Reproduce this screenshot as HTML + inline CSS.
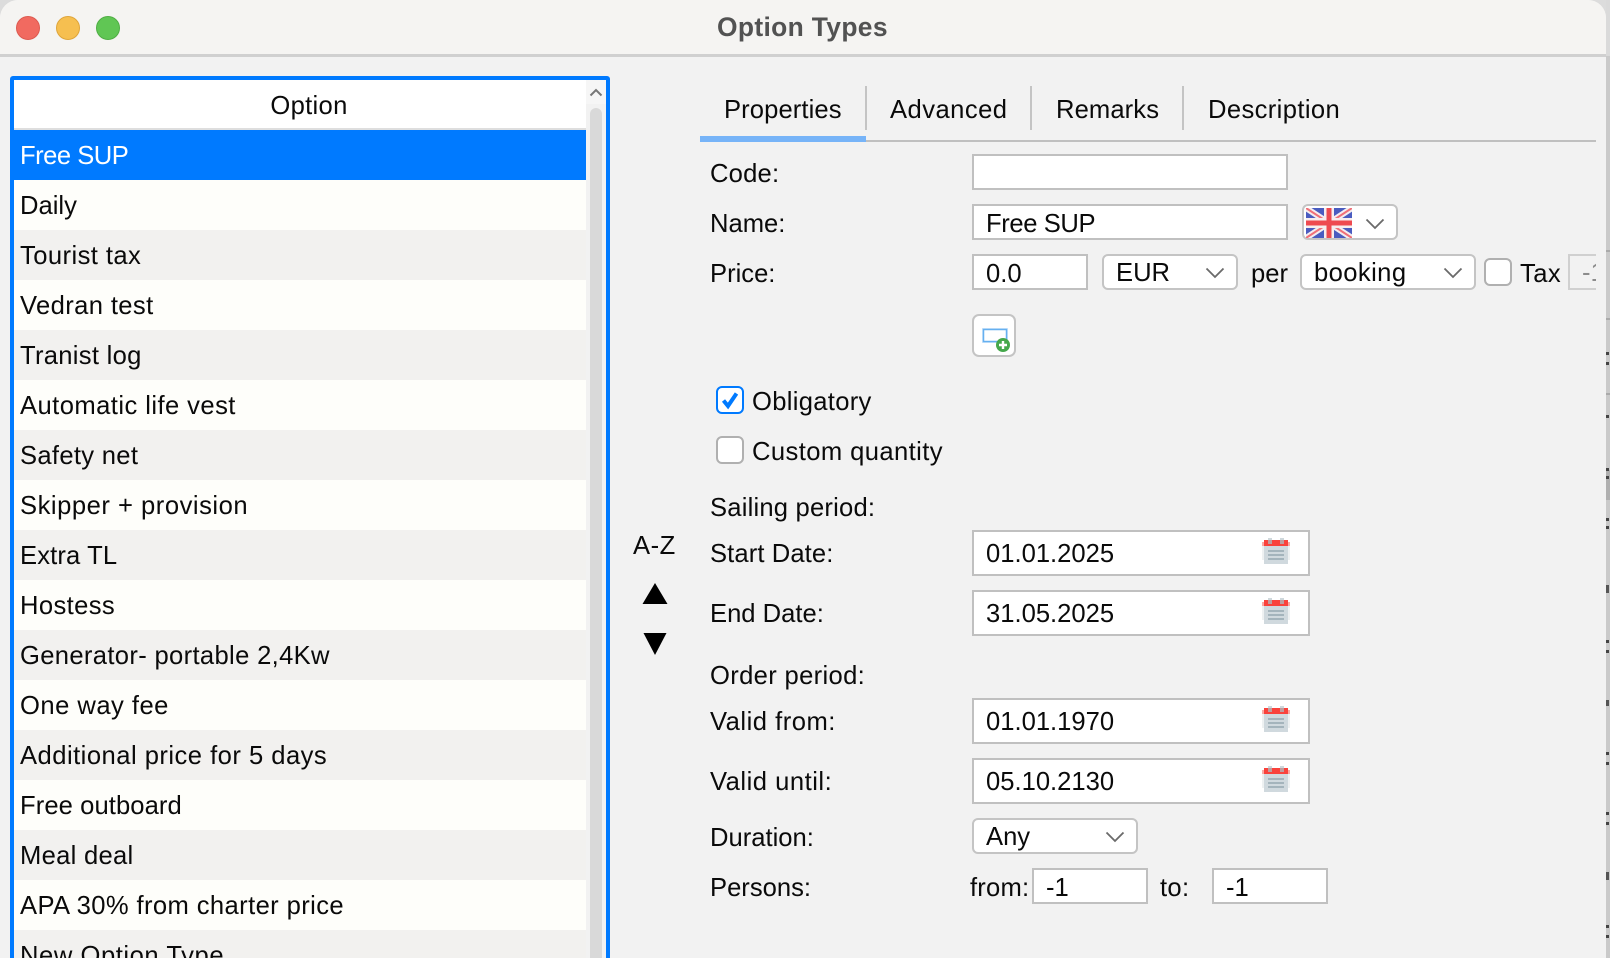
<!DOCTYPE html>
<html>
<head>
<meta charset="utf-8">
<style>
html,body{margin:0;padding:0;width:1610px;height:958px;overflow:hidden;background:#dcdcdc}
body{position:relative;font-family:"Liberation Sans",Arial,sans-serif;color:#0a0a0a;font-size:25.6px}
.a{position:absolute}
.t{position:absolute;white-space:nowrap;line-height:36px;height:36px;margin-top:1px}
.win{position:absolute;left:0;top:0;width:1606px;height:958px;background:#f2f2f2;border-radius:18px 18px 0 0;overflow:hidden}
.bar{position:absolute;left:0;top:0;width:1606px;height:54px;background:#f5f4f2;border-bottom:3px solid #d0d0d0}
.dot{position:absolute;top:16px;width:24px;height:24px;border-radius:50%;box-sizing:border-box}
.inp{position:absolute;box-sizing:border-box;background:#fff;border:2px solid #c0c0c0;height:36px;line-height:36px;padding-left:12px;white-space:nowrap}
.cmb{position:absolute;box-sizing:border-box;background:#fff;border:2px solid #c4c4c4;border-radius:6px;height:36px;line-height:35px;padding-left:12px;white-space:nowrap}
.cmb svg{position:absolute;top:10px}
.date{height:46px;line-height:44px}
.date svg{position:absolute;left:288px;top:6px}
.row{position:absolute;left:14px;width:572px;height:50px;line-height:52px;padding-left:6px;box-sizing:border-box;white-space:nowrap;overflow:hidden}
.l{background:#fefefa}.g{background:#f2f1ef}
.chk{position:absolute;box-sizing:border-box;width:28px;height:28px;background:#fff;border:2px solid #b0b0b0;border-radius:6px}
</style>
</head>
<body>
<svg width="0" height="0" style="position:absolute">
<symbol id="cal" viewBox="0 0 28 26" shape-rendering="crispEdges">
<rect x="0" y="4" width="28" height="18" fill="#eef1f2"/>
<rect x="0" y="4" width="28" height="4" fill="#fba9a4"/>
<rect x="2" y="8" width="24" height="18" fill="#d0d9de"/>
<rect x="2" y="2" width="24" height="6" fill="#f9423c"/>
<rect x="6" y="0" width="4" height="2" fill="#cfd8dc"/>
<rect x="18" y="0" width="4" height="2" fill="#cfd8dc"/>
<rect x="6" y="2" width="4" height="4" fill="#bf9c9e"/>
<rect x="18" y="2" width="4" height="4" fill="#bf9c9e"/>
<rect x="6" y="12" width="16" height="2" fill="#a4b4bc"/>
<rect x="6" y="16" width="16" height="2" fill="#a4b4bc"/>
<rect x="6" y="20" width="16" height="2" fill="#a4b4bc"/>
</symbol>
<symbol id="chev" viewBox="0 0 20 12">
<path d="M1.5 1.5L10 10L18.5 1.5" fill="none" stroke="#6a6a6a" stroke-width="1.8"/>
</symbol>
</svg>

<div class="win">
  <div class="bar"></div>
  <div class="dot" style="left:16px;background:#f16a60;border:1px solid #dd5a50"></div>
  <div class="dot" style="left:56px;background:#f6bf50;border:1px solid #dfa53a"></div>
  <div class="dot" style="left:96px;background:#60c654;border:1px solid #4fae44"></div>
  <div class="t" style="left:717px;top:8px;font-weight:bold;color:#525252;font-size:26.4px;letter-spacing:.35px">Option Types</div>

  <!-- list -->
  <div class="a" style="left:10px;top:76px;width:600px;height:882px;background:#007aff;border-radius:3px 3px 0 0"></div>
  <div class="a" style="left:14px;top:80px;width:592px;height:878px;background:#f2f2f2"></div>
  <div class="a" style="left:14px;top:80px;width:572px;height:48px;background:#fff"></div>
  <div class="a" style="left:14px;top:80px;width:590px;height:48px;line-height:52px;text-align:center;letter-spacing:.3px">Option</div>
  <div class="a" style="left:14px;top:128px;width:572px;height:2px;background:#dedede"></div>
  <div class="a" style="left:586px;top:80px;width:20px;height:24px;background:#f6f6f6"></div>
  <svg class="a" style="left:589px;top:88px" width="14" height="9" viewBox="0 0 14 9"><path d="M1.5 7.5L7 2L12.5 7.5" fill="none" stroke="#777" stroke-width="2"/></svg>
  <div class="a" style="left:590px;top:108px;width:12px;height:850px;background:#d9d9d9;border-radius:6px 6px 0 0"></div>
  <div class="row" style="top:130px;background:#007aff;color:#fff;letter-spacing:-.5px">Free SUP</div>
  <div class="row l" style="top:180px">Daily</div>
  <div class="row g" style="top:230px;letter-spacing:.42px">Tourist tax</div>
  <div class="row l" style="top:280px;letter-spacing:.37px">Vedran test</div>
  <div class="row g" style="top:330px;letter-spacing:.28px">Tranist log</div>
  <div class="row l" style="top:380px;letter-spacing:.43px">Automatic life vest</div>
  <div class="row g" style="top:430px;letter-spacing:.3px">Safety net</div>
  <div class="row l" style="top:480px;letter-spacing:.51px">Skipper + provision</div>
  <div class="row g" style="top:530px;letter-spacing:.13px">Extra TL</div>
  <div class="row l" style="top:580px;letter-spacing:.37px">Hostess</div>
  <div class="row g" style="top:630px;letter-spacing:.33px">Generator- portable 2,4Kw</div>
  <div class="row l" style="top:680px;letter-spacing:.47px">One way fee</div>
  <div class="row g" style="top:730px;letter-spacing:.47px">Additional price for 5 days</div>
  <div class="row l" style="top:780px;letter-spacing:.08px">Free outboard</div>
  <div class="row g" style="top:830px;letter-spacing:.28px">Meal deal</div>
  <div class="row l" style="top:880px;letter-spacing:.39px">APA 30% from charter price</div>
  <div class="row g" style="top:930px;height:28px;letter-spacing:.55px">New Option Type</div>

  <!-- sort -->
  <div class="t" style="left:633px;top:527px;letter-spacing:.5px">A-Z</div>
  <svg class="a" style="left:642px;top:583px" width="26" height="21"><path d="M13 0L25.5 21H.5Z" fill="#000"/></svg>
  <svg class="a" style="left:643px;top:633px" width="24" height="22"><path d="M0.5 0H23.5L12 22Z" fill="#000"/></svg>

  <!-- tabs -->
  <div class="a" style="left:700px;top:140px;width:896px;height:2px;background:#c0c0c0"></div>
  <div class="a" style="left:700px;top:136px;width:166px;height:6px;background:#77b4f8"></div>
  <div class="a" style="left:864.5px;top:86px;width:2px;height:44px;background:#c4c4c4"></div>
  <div class="a" style="left:1030px;top:86px;width:2px;height:44px;background:#c4c4c4"></div>
  <div class="a" style="left:1182px;top:86px;width:2px;height:44px;background:#c4c4c4"></div>
  <div class="t" style="left:724px;top:91px;letter-spacing:.1px">Properties</div>
  <div class="t" style="left:890px;top:91px;letter-spacing:.45px">Advanced</div>
  <div class="t" style="left:1056px;top:91px;letter-spacing:.1px">Remarks</div>
  <div class="t" style="left:1208px;top:91px;letter-spacing:.37px">Description</div>

  <!-- form -->
  <div class="t" style="left:710px;top:155px;letter-spacing:.2px">Code:</div>
  <div class="inp" style="left:972px;top:154px;width:316px"></div>
  <div class="t" style="left:710px;top:205px">Name:</div>
  <div class="inp" style="left:972px;top:204px;width:316px;letter-spacing:-.4px">Free SUP</div>
  <div class="cmb" style="left:1302px;top:204px;width:96px;padding:0">
    <svg style="left:2px;top:2px" width="46" height="30" viewBox="0 0 46 30">
      <rect width="46" height="30" fill="#4a5cc0"/>
      <path d="M0 0L46 30M46 0L0 30" stroke="#f4eef0" stroke-width="6"/>
      <path d="M0 0L46 30M46 0L0 30" stroke="#f07078" stroke-width="2"/>
      <path d="M23 0V30M0 15H46" stroke="#f6eeee" stroke-width="10"/>
      <path d="M23 0V30M0 15H46" stroke="#ee4a50" stroke-width="5"/>
    </svg>
    <svg style="left:61px;top:12px" width="20" height="12"><use href="#chev"/></svg>
  </div>
  <div class="t" style="left:710px;top:255px">Price:</div>
  <div class="inp" style="left:972px;top:254px;width:116px">0.0</div>
  <div class="cmb" style="left:1102px;top:254px;width:136px">EUR<svg style="left:101px;top:11px" width="20" height="12"><use href="#chev"/></svg></div>
  <div class="t" style="left:1251px;top:255px">per</div>
  <div class="cmb" style="left:1300px;top:254px;width:176px;letter-spacing:.4px">booking<svg style="left:141px;top:11px" width="20" height="12"><use href="#chev"/></svg></div>
  <div class="chk" style="left:1484px;top:258px"></div>
  <div class="t" style="left:1520px;top:255px;letter-spacing:.4px">Tax</div>
  <div class="a" style="left:1568px;top:254px;width:28px;height:36px;overflow:hidden">
    <div class="a" style="left:0;top:0;width:40px;height:36px;box-sizing:border-box;background:#f2f2f2;border:2px solid #d0d0d0;line-height:34px;padding-left:12px;color:#8c8c8c">-1</div>
  </div>

  <!-- add button -->
  <div class="a" style="left:972px;top:314px;width:44px;height:43px;box-sizing:border-box;background:#fff;border:2px solid #c4c4c4;border-radius:7px"></div>
  <svg class="a" style="left:980px;top:327px" width="32" height="26" viewBox="0 0 32 26">
    <rect x="2" y="1" width="26" height="15" fill="#cfe6fb"/>
    <rect x="3.5" y="2.5" width="23" height="12" fill="#fff" stroke="#66b0f0" stroke-width="1.5"/>
    <circle cx="23" cy="18" r="7" fill="#45a84c"/>
    <path d="M23 14V22M19 18H27" stroke="#fff" stroke-width="2.4"/>
  </svg>

  <!-- checks -->
  <div class="chk" style="left:716px;top:386px;border-color:#007aff"></div>
  <svg class="a" style="left:720px;top:390px" width="20" height="20" viewBox="0 0 20 20"><path d="M3.5 10.5L8 16L16.5 3.5" fill="none" stroke="#007aff" stroke-width="4"/></svg>
  <div class="t" style="left:752px;top:383px;letter-spacing:.3px">Obligatory</div>
  <div class="chk" style="left:716px;top:436px"></div>
  <div class="t" style="left:752px;top:433px;letter-spacing:.4px">Custom quantity</div>

  <div class="t" style="left:710px;top:489px;letter-spacing:.2px">Sailing period:</div>
  <div class="t" style="left:710px;top:535px;letter-spacing:.1px">Start Date:</div>
  <div class="inp date" style="left:972px;top:530px;width:338px">01.01.2025<svg width="28" height="26"><use href="#cal"/></svg></div>
  <div class="t" style="left:710px;top:595px">End Date:</div>
  <div class="inp date" style="left:972px;top:590px;width:338px">31.05.2025<svg width="28" height="26"><use href="#cal"/></svg></div>
  <div class="t" style="left:710px;top:657px;letter-spacing:.33px">Order period:</div>
  <div class="t" style="left:710px;top:703px;letter-spacing:.5px">Valid from:</div>
  <div class="inp date" style="left:972px;top:698px;width:338px">01.01.1970<svg width="28" height="26"><use href="#cal"/></svg></div>
  <div class="t" style="left:710px;top:763px;letter-spacing:.5px">Valid until:</div>
  <div class="inp date" style="left:972px;top:758px;width:338px">05.10.2130<svg width="28" height="26"><use href="#cal"/></svg></div>
  <div class="t" style="left:710px;top:819px">Duration:</div>
  <div class="cmb" style="left:972px;top:818px;width:166px">Any<svg style="left:131px;top:11px" width="20" height="12"><use href="#chev"/></svg></div>
  <div class="t" style="left:710px;top:869px">Persons:</div>
  <div class="t" style="left:970px;top:869px;letter-spacing:.2px">from:</div>
  <div class="inp" style="left:1032px;top:868px;width:116px">-1</div>
  <div class="t" style="left:1160px;top:869px;letter-spacing:.3px">to:</div>
  <div class="inp" style="left:1212px;top:868px;width:116px">-1</div>
</div>

<!-- right edge strip -->
<div class="a" style="left:1606px;top:0;width:4px;height:958px;background:#cacaca">
  <div class="a" style="left:0;top:0;width:4px;height:56px;background:#dadada"></div>
  <div class="a" style="left:0;top:250px;width:4px;height:2px;background:#aaa"></div>
  <div class="a" style="left:0;top:318px;width:4px;height:2px;background:#aaa"></div>
  <div class="a" style="left:0;top:393px;width:4px;height:2px;background:#aaa"></div>
  <div class="a" style="left:0;top:470px;width:4px;height:30px;background:#b0b0b0"></div>
  <div class="a" style="left:0;top:352px;width:3px;height:3px;background:#444"></div>
  <div class="a" style="left:0;top:362px;width:3px;height:3px;background:#444"></div>
  <div class="a" style="left:0;top:415px;width:3px;height:3px;background:#444"></div>
  <div class="a" style="left:0;top:468px;width:3px;height:3px;background:#444"></div>
  <div class="a" style="left:0;top:476px;width:3px;height:3px;background:#444"></div>
  <div class="a" style="left:0;top:518px;width:3px;height:3px;background:#444"></div>
  <div class="a" style="left:0;top:526px;width:3px;height:3px;background:#444"></div>
  <div class="a" style="left:0;top:585px;width:3px;height:8px;background:#555"></div>
  <div class="a" style="left:0;top:640px;width:3px;height:3px;background:#444"></div>
  <div class="a" style="left:0;top:650px;width:3px;height:3px;background:#444"></div>
  <div class="a" style="left:0;top:700px;width:3px;height:6px;background:#555"></div>
  <div class="a" style="left:0;top:752px;width:3px;height:3px;background:#444"></div>
  <div class="a" style="left:0;top:762px;width:3px;height:3px;background:#444"></div>
  <div class="a" style="left:0;top:812px;width:3px;height:3px;background:#444"></div>
  <div class="a" style="left:0;top:822px;width:3px;height:3px;background:#444"></div>
  <div class="a" style="left:0;top:872px;width:3px;height:8px;background:#555"></div>
  <div class="a" style="left:0;top:925px;width:3px;height:3px;background:#444"></div>
  <div class="a" style="left:0;top:935px;width:3px;height:3px;background:#444"></div>
</div>
</body>
</html>
